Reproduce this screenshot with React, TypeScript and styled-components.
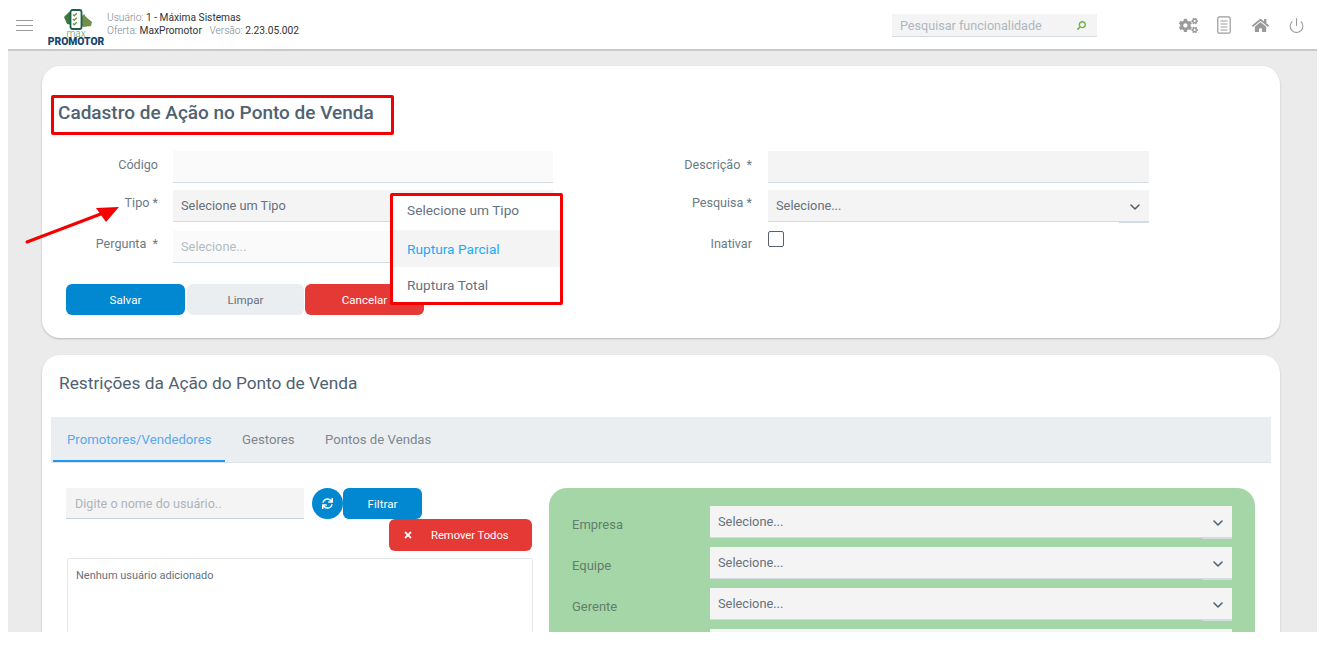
import React from 'react';
import styled, { createGlobalStyle } from 'styled-components';
import { ChevronDown, Power } from 'lucide-react';
import { FaCogs, FaHome, FaSearch, FaSync, FaTimes } from 'react-icons/fa';

const Global = createGlobalStyle`
  html, body { margin: 0; padding: 0; background: #fff; overflow: hidden; }
  body { font-family: Roboto, "Liberation Sans", sans-serif; }
  * { box-sizing: border-box; }
`;

const Frame = styled.div`
  position: relative;
  width: 1326px;
  height: 646px;
  padding: 0 9px 14px 8px;
  background: #fff;
  overflow: hidden;
`;
const Screen = styled.div`
  height: 632px;
  display: flex;
  flex-direction: column;
  background: #ebebeb;
  overflow: hidden;
`;
const Header = styled.header`
  flex: 0 0 51px;
  display: flex;
  align-items: center;
  background: #fff;
  border-bottom: 2px solid #c9c9c9;
  color: #2d3338;
`;
const Burger = styled.div`
  width: 17px;
  height: 11px;
  margin: 2px 14px 0 8px;
  border-top: 1.5px solid #9b9b9b;
  border-bottom: 1.5px solid #9b9b9b;
  position: relative;
  &::after {
    content: '';
    position: absolute;
    left: 0;
    right: 0;
    top: 3.5px;
    height: 1.5px;
    background: #9b9b9b;
  }
`;
const Logo = styled.div`
  width: 58px;
  align-self: flex-start;
  margin-top: 9px;
  display: flex;
  flex-direction: column;
  align-items: center;
  flex-shrink: 0;
  svg {
    margin-left: 3px;
  }
`;
const LogoMax = styled.span`
  font-size: 10px;
  font-weight: 300;
  line-height: 7px;
  color: #6f8f4a;
  margin-top: 0;
`;
const LogoName = styled.span`
  font-size: 10.3px;
  line-height: 10px;
  font-weight: 900;
  color: #17456f;
`;
const Info = styled.div`
  margin: -1px 0 0 2px;
  font-size: 10.2px;
  line-height: 13.5px;
`;
const InfoLine = styled.div`
  white-space: nowrap;
`;
const InfoKey = styled.span<{ $gap?: boolean }>`
  color: #7b8894;
  font-weight: 300;
  margin-left: ${(p) => (p.$gap ? '5px' : '0')};
`;
const SearchBox = styled.div`
  flex: 0 0 205px;
  height: 23px;
  margin: 2px 0 0 auto;
  padding: 0 11px 0 8px;
  display: flex;
  align-items: center;
  justify-content: space-between;
  background: #f4f4f4;
  border-bottom: 1px solid #d6dde2;
  color: #acb8c2;
  font-size: 12.6px;
  white-space: nowrap;
  svg {
    color: #6db33f;
    transform: scaleX(-1);
  }
`;
const HeaderIcons = styled.div`
  display: flex;
  align-items: center;
  margin: 1px 3px 0 73px;
  color: #9a9a9a;
`;
const HeadIcon = styled.div`
  width: 36px;
  display: flex;
  justify-content: center;
`;

const Card = styled.section<{ $top: number }>`
  position: relative;
  flex-shrink: 0;
  width: 1238px;
  margin: ${(p) => p.$top}px 0 0 34px;
  background: #fff;
  border-radius: 18px;
  box-shadow: 0 1px 2px rgba(0, 0, 0, 0.22);
`;
const MainCard = styled(Card)`
  height: 272px;
  padding: 29px 0 0 0;
`;
const TitleBox = styled.div`
  width: 343px;
  height: 40px;
  margin-left: 9px;
  padding: 0 0 6px 4px;
  display: flex;
  align-items: center;
  border: 3px solid #f40000;
  border-radius: 2px;
  color: #4f6272;
  font-size: 19px;
  font-weight: 500;
  white-space: nowrap;
`;
const FormColumns = styled.div`
  display: flex;
  margin-top: 16px;
`;
const Column = styled.div<{ $w: number }>`
  width: ${(p) => p.$w}px;
`;
const Row = styled.div<{ $h: number }>`
  display: flex;
  height: ${(p) => p.$h}px;
`;
const Label = styled.label<{ $w: number; $top?: number; $gap?: number }>`
  width: ${(p) => p.$w}px;
  margin-right: ${(p) => p.$gap ?? 15}px;
  padding-top: ${(p) => p.$top ?? 6}px;
  text-align: right;
  color: #6c7a86;
  font-size: 12.6px;
  line-height: 16px;
  white-space: nowrap;
`;
const Field = styled.div<{ $w: number; $bg?: string; $muted?: boolean }>`
  width: ${(p) => p.$w}px;
  height: 32px;
  padding: 0 8px;
  display: flex;
  align-items: center;
  background: ${(p) => p.$bg ?? '#f4f4f4'};
  border-bottom: 1px solid #d5dce1;
  color: ${(p) => (p.$muted ? '#b4bcc3' : '#66727d')};
  font-size: 12.8px;
  white-space: nowrap;
`;
const SelectBox = styled(Field)`
  position: relative;
  justify-content: space-between;
  svg {
    position: absolute;
    right: 6px;
    top: 9px;
    color: #4f6272;
  }
  &::after {
    content: '';
    position: absolute;
    right: 0;
    bottom: -2px;
    width: 30px;
    height: 1px;
    background: #d5dce1;
  }
`;
const Check = styled.div`
  width: 16px;
  height: 16px;
  border: 1.5px solid #56636e;
  border-radius: 2px;
`;
const Buttons = styled.div`
  display: flex;
  margin: 21px 0 0 24px;
  gap: 2px;
`;
const Button = styled.button<{ $w: number; $bg: string; $fg?: string }>`
  width: ${(p) => p.$w}px;
  height: 31px;
  padding: 0;
  display: flex;
  align-items: center;
  justify-content: center;
  border: 0;
  border-radius: 6px;
  background: ${(p) => p.$bg};
  color: ${(p) => p.$fg ?? '#fff'};
  font-family: inherit;
  font-size: 11.6px;
  flex-shrink: 0;
`;
const CancelButton = styled(Button)`
  margin-left: -1px;
`;

const DropMenu = styled.div`
  position: absolute;
  left: 348px;
  top: 127px;
  width: 173px;
  height: 112px;
  background: #fff;
  border: 3px solid #f40000;
  border-radius: 2px;
`;
const DropItem = styled.div<{ $h: number; $pb?: number; $active?: boolean }>`
  height: ${(p) => p.$h}px;
  padding: 0 0 ${(p) => p.$pb ?? 0}px 14px;
  display: flex;
  align-items: center;
  background: ${(p) => (p.$active ? '#f4f4f4' : '#fff')};
  color: ${(p) => (p.$active ? '#1fa9f4' : '#66727d')};
  font-size: 13.7px;
`;
const Arrow = styled.svg`
  position: absolute;
  left: 24px;
  top: 204px;
  width: 100px;
  height: 42px;
`;

const RestrictCard = styled(Card)`
  height: 400px;
  padding: 0 9px;
`;
const SubTitle = styled.h2`
  margin: 0;
  height: 62px;
  padding: 0 0 6px 8px;
  display: flex;
  align-items: center;
  color: #4f6272;
  font-size: 17.3px;
  font-weight: 400;
`;
const Tabs = styled.nav`
  width: 1220px;
  height: 46px;
  display: flex;
  padding-left: 2px;
  background: #ebeef1;
  border-bottom: 1px solid #dfe4e8;
`;
const Tab = styled.div<{ $active?: boolean; $w: number; $pl: number }>`
  width: ${(p) => p.$w}px;
  height: 45px;
  padding: 1px 0 0 ${(p) => p.$pl}px;
  display: flex;
  align-items: center;
  color: ${(p) => (p.$active ? '#5aa7ee' : '#7d8790')};
  font-size: 13.2px;
  white-space: nowrap;
  border-bottom: 2px solid ${(p) => (p.$active ? '#2196f3' : 'transparent')};
`;
const Panels = styled.div`
  display: flex;
  padding-top: 25px;
`;
const LeftPane = styled.div`
  width: 498px;
  padding-left: 15px;
`;
const FilterRow = styled.div`
  display: flex;
  height: 31px;
`;
const NameInput = styled.div`
  width: 238px;
  height: 31px;
  padding: 0 9px;
  display: flex;
  align-items: center;
  background: #f4f4f4;
  border-bottom: 1px solid #c9d2d9;
  color: #adb5bc;
  font-size: 12.6px;
`;
const RoundBtn = styled.div`
  width: 31px;
  height: 31px;
  margin-left: 8px;
  border-radius: 50%;
  display: flex;
  align-items: center;
  justify-content: center;
  background: #0288d1;
  color: #fff;
`;
const ActionRow = styled.div`
  display: flex;
  justify-content: flex-end;
  width: 466px;
`;
const RemoveBtn = styled(Button)`
  justify-content: flex-start;
  padding-left: 14px;
  height: 32px;
  font-size: 11.2px;
  svg {
    margin-right: 18px;
  }
`;
const ListBox = styled.div`
  width: 466px;
  height: 160px;
  margin: 7px 0 0 1px;
  padding: 9px 8px;
  border: 1px solid #e4e7ea;
  border-radius: 2px;
  color: #66727d;
  font-size: 11px;
  line-height: 15px;
`;
const GreenPanel = styled.div`
  width: 706px;
  height: 300px;
  padding: 18px 23px;
  background: #a5d6a7;
  border-radius: 18px;
`;
const GreenRow = styled.div`
  display: flex;
  height: 41px;
`;
const GreenLabel = styled.span`
  width: 138px;
  padding-top: 11px;
  color: #5f7f6b;
  font-size: 13px;
  line-height: 16px;
`;

const DocIcon = () => (
  <svg width="14" height="18" viewBox="0 0 14 18" fill="none" stroke="#9a9a9a" strokeWidth="1.2">
    <rect x="0.8" y="0.8" width="12.4" height="16.4" rx="1.5" />
    <path d="M3.5 5h7M3.5 8h7M3.5 11h7M3.5 14h7" />
  </svg>
);
const LogoMark = () => (
  <svg width="28" height="21" viewBox="0 0 28 21">
    <path d="M0 8 L5 3 L8 3 L8 16 L3 15Z" fill="#3f7a3c" />
    <path d="M17 8 L20 5 L22 8 L28 13 L27 17 L19 18 L16 15Z" fill="#6f8f4a" />
    <rect x="6.5" y="1" width="11" height="19" rx="2" fill="#fff" stroke="#1d5e4e" strokeWidth="1.8" />
    <path d="M9 5.5l1.3 1.3 2.5-2.5M9 10l1.3 1.3 2.5-2.5M9 14.5l1.3 1.3 2.5-2.5" fill="none" stroke="#6f8f4a" strokeWidth="1.3" />
  </svg>
);

const Select = ({ w, text, bg }: { w: number; text?: string; bg?: string }) => (
  <SelectBox $w={w} $bg={bg}>
    {text}
    <ChevronDown size={16} strokeWidth={2.4} />
  </SelectBox>
);

const greenRows = [
  { key: 'empresa', name: 'Empresa', text: 'Selecione...' },
  { key: 'equipe', name: 'Equipe', text: 'Selecione...' },
  { key: 'gerente', name: 'Gerente', text: 'Selecione...' },
  { key: 'quarta', name: '', text: '' },
];

export default function App() {
  return (
    <Frame>
      <Global />
      <Screen>
        <Header>
          <Burger />
          <Logo>
            <LogoMark />
            <LogoMax>max</LogoMax>
            <LogoName>PROMOTOR</LogoName>
          </Logo>
          <Info>
            <InfoLine>
              <InfoKey>Usuário:</InfoKey> 1 - Máxima Sistemas
            </InfoLine>
            <InfoLine>
              <InfoKey>Oferta:</InfoKey> MaxPromotor <InfoKey $gap>Versão:</InfoKey> 2.23.05.002
            </InfoLine>
          </Info>
          <SearchBox>
            Pesquisar funcionalidade
            <FaSearch size={9} />
          </SearchBox>
          <HeaderIcons>
            <HeadIcon><FaCogs size={19} /></HeadIcon>
            <HeadIcon><DocIcon /></HeadIcon>
            <HeadIcon><FaHome size={17} /></HeadIcon>
            <HeadIcon><Power size={17} strokeWidth={1.5} /></HeadIcon>
          </HeaderIcons>
        </Header>

        <MainCard $top={15}>
          <TitleBox>Cadastro de Ação no Ponto de Venda</TitleBox>
          <FormColumns>
            <Column $w={511}>
              <Row $h={39}>
                <Label $w={116}>Código</Label>
                <Field $w={380} $bg="#fafafa" />
              </Row>
              <Row $h={41}>
                <Label $w={116} $top={5}>Tipo *</Label>
                <Field $w={380}>Selecione um Tipo</Field>
              </Row>
              <Row $h={32}>
                <Label $w={116} $top={5}>Pergunta&nbsp; *</Label>
                <Field $w={380} $bg="#fafafa" $muted>Selecione...</Field>
              </Row>
            </Column>
            <Column $w={596}>
              <Row $h={39}>
                <Label $w={199} $gap={16}>Descrição&nbsp; *</Label>
                <Field $w={381} />
              </Row>
              <Row $h={41}>
                <Label $w={199} $gap={16} $top={5}>Pesquisa *</Label>
                <Select w={381} text="Selecione..." />
              </Row>
              <Row $h={32}>
                <Label $w={199} $gap={16} $top={5}>Inativar</Label>
                <Check />
              </Row>
            </Column>
          </FormColumns>
          <Buttons>
            <Button $w={119} $bg="#0288d1">Salvar</Button>
            <Button $w={117} $bg="#ebeef1" $fg="#66727d">Limpar</Button>
            <CancelButton $w={119} $bg="#e53935">Cancelar</CancelButton>
          </Buttons>
          <DropMenu>
            <DropItem $h={34} $pb={6}>Selecione um Tipo</DropItem>
            <DropItem $h={37} $active>Ruptura Parcial</DropItem>
            <DropItem $h={35}>Ruptura Total</DropItem>
          </DropMenu>
        </MainCard>

        <RestrictCard $top={17}>
          <SubTitle>Restrições da Ação do Ponto de Venda</SubTitle>
          <Tabs>
            <Tab $active $w={172} $pl={14}>Promotores/Vendedores</Tab>
            <Tab $w={83} $pl={17}>Gestores</Tab>
            <Tab $w={200} $pl={17}>Pontos de Vendas</Tab>
          </Tabs>
          <Panels>
            <LeftPane>
              <FilterRow>
                <NameInput>Digite o nome do usuário..</NameInput>
                <RoundBtn><FaSync size={11} /></RoundBtn>
                <Button $w={79} $bg="#0288d1">Filtrar</Button>
              </FilterRow>
              <ActionRow>
                <RemoveBtn $w={143} $bg="#e53935">
                  <FaTimes size={10} />
                  Remover Todos
                </RemoveBtn>
              </ActionRow>
              <ListBox>Nenhum usuário adicionado</ListBox>
            </LeftPane>
            <GreenPanel>
              {greenRows.map((row) => (
                <GreenRow key={row.key}>
                  <GreenLabel>{row.name}</GreenLabel>
                  <Select w={522} text={row.text} />
                </GreenRow>
              ))}
            </GreenPanel>
          </Panels>
        </RestrictCard>
      </Screen>
      <Arrow viewBox="0 0 100 42">
        <path d="M3 38 L82 8" stroke="#f40000" strokeWidth="3" strokeLinecap="round" />
        <path d="M95 3 L72 4 L82 18Z" fill="#f40000" />
      </Arrow>
    </Frame>
  );
}
